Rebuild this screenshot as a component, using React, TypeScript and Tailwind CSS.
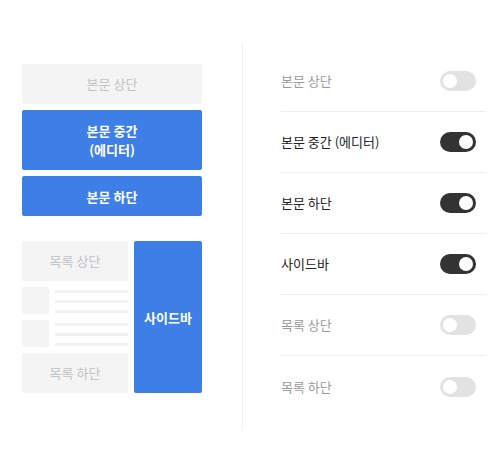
import React from "react";

const font = { fontFamily: '"Noto Sans CJK KR", "Noto Sans", sans-serif' };

type Row = { label: string; on: boolean };

const rows: Row[] = [
  { label: "본문 상단", on: false },
  { label: "본문 중간 (에디터)", on: true },
  { label: "본문 하단", on: true },
  { label: "사이드바", on: true },
  { label: "목록 상단", on: false },
  { label: "목록 하단", on: false },
];

function Toggle({ on }: { on: boolean }) {
  return (
    <div
      className={
        on
          ? "flex h-[20px] w-[36px] items-center justify-end rounded-full bg-[#333333] px-[3px]"
          : "flex h-[20px] w-[36px] items-center justify-start rounded-full bg-[#e2e2e2] px-[3px]"
      }
    >
      <div className="h-[14px] w-[14px] rounded-full bg-white" />
    </div>
  );
}

function ListRow() {
  return (
    <div className="flex h-[27px] gap-[6px]">
      <div className="w-[27px] rounded-[2px] bg-[#f4f4f4]" />
      <div className="flex flex-1 flex-col gap-[7px] pt-[3px]">
        <div className="h-[3px] bg-[#f2f2f2]" />
        <div className="h-[3px] bg-[#f2f2f2]" />
        <div className="h-[3px] bg-[#f2f2f2]" />
      </div>
    </div>
  );
}

function Preview() {
  const gray =
    "flex items-center justify-center rounded-[2px] bg-[#f4f4f4] text-[13px] text-[#c2c2c2]";
  const blue =
    "flex items-center justify-center rounded-[2px] bg-[#3d7fe6] text-center text-[13px] font-bold leading-[19px] text-white";
  return (
    <div className="ml-[22px] mt-[21px] flex w-[180px] flex-col">
      <div className="flex flex-col gap-[6px]">
        <div className={gray + " h-[40px]"}>본문 상단</div>
        <div className={blue + " h-[60px]"}>
          본문 중간
          <br />
          (에디터)
        </div>
        <div className={blue + " h-[40px]"}>본문 하단</div>
      </div>
      <div className="mt-[25px] flex gap-[6px]">
        <div className="flex w-[106px] flex-col gap-[6px]">
          <div className={gray + " h-[40px]"}>목록 상단</div>
          <ListRow />
          <ListRow />
          <div className={gray + " h-[40px]"}>목록 하단</div>
        </div>
        <div className={blue + " h-[152px] flex-1"}>사이드바</div>
      </div>
    </div>
  );
}

export default function App() {
  return (
    <div className="h-[472px] w-[500px] bg-white" style={font}>
      <div className="flex pt-[43px]">
        <Preview />
        <div className="ml-[40px] flex h-[387px] flex-1 flex-col border-l border-[#efefef] pl-[38px] pr-[14px] pt-[8px]">
          {rows.map((r, i) => (
            <div
              key={r.label}
              className={
                i < rows.length - 1
                  ? "flex h-[61px] items-center justify-between border-b border-[#efefef] pr-[10px]"
                  : "flex h-[61px] items-center justify-between pr-[10px]"
              }
            >
              <span
                className={
                  r.on
                    ? "text-[13px] text-[#222222]"
                    : "text-[13px] text-[#9a9a9a]"
                }
              >
                {r.label}
              </span>
              <Toggle on={r.on} />
            </div>
          ))}
        </div>
      </div>
    </div>
  );
}
